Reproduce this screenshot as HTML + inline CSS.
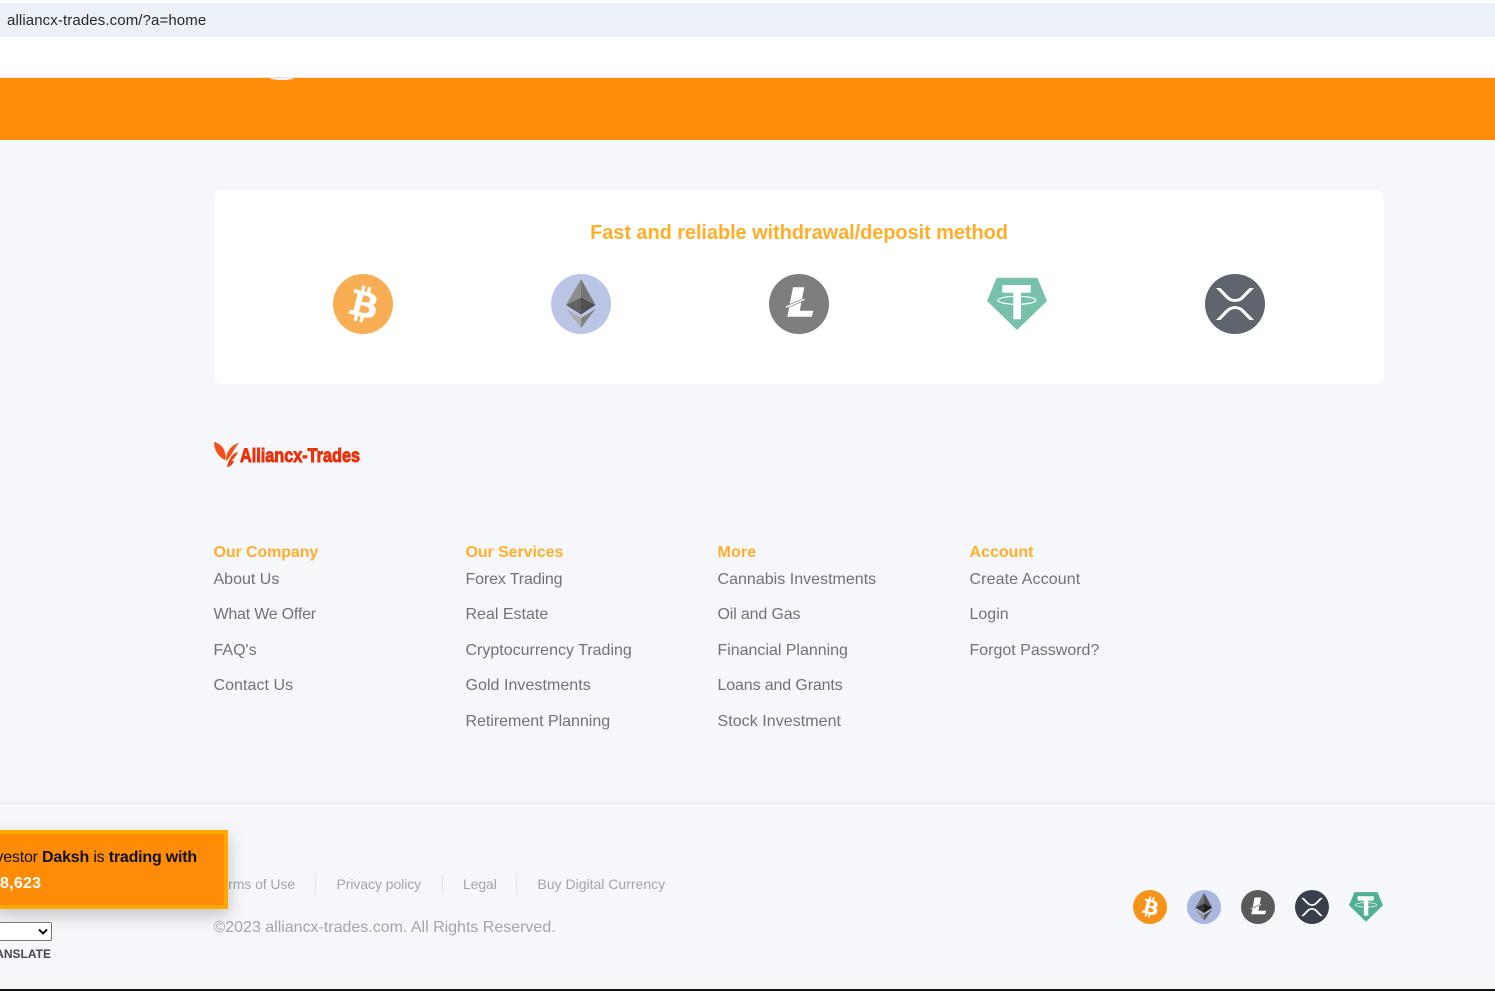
<!DOCTYPE html>
<html lang="en"><head><meta charset="utf-8"><title>alliancx-trades.com</title>
<style>
html,body{margin:0;padding:0;width:1495px;height:991px;overflow:hidden;background:#f5f7fa;font-family:"Liberation Sans",sans-serif}
.a{position:absolute;white-space:nowrap}
.h{font-size:16px;font-weight:700;color:#ffae2b;line-height:20px}
.l{font-size:16px;color:#6f7278;line-height:20px}
.s{font-size:14px;color:#a2a5ab;line-height:18px}
.v{position:absolute;width:1px;height:21px;top:874px;background:#e2e4e8}
svg{position:absolute;display:block}
</style></head><body>
<svg width="0" height="0" style="position:absolute"><defs>
<symbol id="btc" viewBox="0 0 32 32"><circle cx="16" cy="16" r="16" fill="#f7931a"/><path fill="#fff" d="M23.189 14.02c.314-2.096-1.283-3.223-3.465-3.975l.708-2.84-1.728-.43-.69 2.765c-.454-.114-.92-.22-1.385-.326l.695-2.783L15.596 6l-.708 2.839c-.376-.086-.746-.17-1.104-.26l.002-.009-2.384-.595-.46 1.846s1.283.294 1.256.312c.7.175.826.638.805 1.006l-.806 3.235c.048.012.11.03.18.057l-.183-.045-1.13 4.532c-.086.212-.303.531-.793.41.018.025-1.256-.313-1.256-.313l-.858 1.978 2.25.561c.418.105.828.215 1.231.318l-.715 2.872 1.727.43.708-2.84c.472.127.93.245 1.378.357l-.706 2.828 1.728.43.715-2.866c2.948.558 5.164.333 6.097-2.333.752-2.146-.037-3.385-1.588-4.192 1.13-.26 1.98-1.003 2.207-2.538zm-3.95 5.538c-.533 2.147-4.148.986-5.32.695l.95-3.805c1.172.293 4.929.872 4.37 3.11zm.535-5.569c-.487 1.953-3.495.96-4.47.717l.86-3.45c.975.243 4.118.696 3.61 2.733z"/></symbol>
<symbol id="eth" viewBox="0 0 60 60"><circle cx="30" cy="30" r="30" fill="#a9b6de"/><polygon points="30,5 15,31 30,23.5" fill="#6f6f6f"/><polygon points="30,5 44.5,31 30,23.5" fill="#505050"/><polygon points="15,31 30,23.5 30,40.500" fill="#353535"/><polygon points="44.5,31 30,23.5 30,40.500" fill="#1f1f1f"/><polygon points="15,35 30,44 30,54" fill="#959595"/><polygon points="44.5,35 30,44 30,54" fill="#5f5f5f"/></symbol>
<symbol id="ltc" viewBox="0 0 60 60"><circle cx="30" cy="30" r="30" fill="#5a5a5a"/><polygon fill="#fff" points="24,13.3 35.3,13.3 30.7,36.7 44.3,36.7 42.7,42.7 18.3,42.7"/><path d="M17 33.2L35.500 25.300" stroke="#5a5a5a" stroke-width="2.8" fill="none"/><path d="M17 33.2L35.500 25.300" stroke="#fff" stroke-width="1.4" fill="none"/></symbol>
<symbol id="xrp" viewBox="0 0 60 60"><circle cx="30" cy="30" r="30" fill="#373f4a"/><path fill="#fff" d="M11 14H15.500L24 22.800C27 25.800 33 25.800 36 22.800L44.500 14H49L38.500 24.700C34 29 26 29 21.500 24.700Z"/><path fill="#fff" d="M11 46H15.500L24 37.200C27 34.200 33 34.200 36 37.200L44.500 46H49L38.500 35.300C34 31 26 31 21.500 35.300Z"/></symbol>
<symbol id="usdt" viewBox="0 0 60 60"><polygon points="9.7,3.7 50.3,3.7 60,27 30,56 0,27" fill="#50af95"/><path fill="#fff" d="M15.3 11H43.7V18.7H34V45.3H26.3V18.7H15.3Z"/><ellipse cx="30" cy="26.3" rx="19" ry="4" fill="none" stroke="#fff" stroke-width="1.2"/></symbol>
</defs></svg>

<div class="a" style="left:0;top:0;width:1495px;height:3px;background:#fff"></div>
<div class="a" style="left:0;top:3px;width:1495px;height:34px;background:#ebf0f9"></div>
<div class="a" style="left:7px;top:12px;font-size:15px;line-height:18px;color:#26282c;letter-spacing:.11px">alliancx-trades.com/?a=home</div>
<div class="a" style="left:0;top:37px;width:1495px;height:41px;background:#fff"></div>
<div class="a" style="left:0;top:77px;width:1495px;height:1px;background:#e4e4e4"></div>
<div class="a" style="left:0;top:78px;width:1495px;height:62px;background:#ff8d0a"></div>
<div class="a" style="left:270px;top:78px;width:24px;height:2px;background:#f1f1f1;border-radius:0 0 12px 12px/0 0 2px 2px"></div>

<div class="a" style="left:214px;top:190px;width:1170px;height:194px;background:#fff;border-radius:8px"></div>
<div class="a" style="left:214px;top:221px;width:1170px;text-align:center;font-size:20px;font-weight:700;line-height:24px;color:#ffae2b;letter-spacing:-.08px">Fast and reliable withdrawal/deposit method</div>
<svg style="left:333px;top:274px;opacity:.75" width="60" height="60"><use href="#btc"/></svg>
<svg style="left:551px;top:274px;opacity:.78" width="60" height="60"><use href="#eth"/></svg>
<svg style="left:769px;top:274px;opacity:.78" width="60" height="60"><use href="#ltc"/></svg>
<svg style="left:987px;top:274px;opacity:.78" width="60" height="60"><use href="#usdt"/></svg>
<svg style="left:1205px;top:274px;opacity:.8" width="60" height="60"><use href="#xrp"/></svg>

<svg style="left:213px;top:440px" width="150" height="30" viewBox="0 0 150 30">
<defs><linearGradient id="g" x1="0" y1="0" x2="0" y2="1"><stop offset="0" stop-color="#f0440f"/><stop offset="1" stop-color="#e81f05"/></linearGradient></defs>
<path fill="#f4501a" d="M1 2C6 3 11 7 12 13C13 16 13 18 12 20C7 18 1 11 1 2Z"/>
<path fill="#f4501a" d="M26 3C21 4 16 8 14 14C13 17 13 19 13 21C18 17 20 10 26 3Z"/>
<path fill="#ee3a0c" d="M25 12C20 13 16 18 14 27C17 27 20 24 21 21L18 20.500C21 19 23 16 25 12Z"/>
<text x="27" y="22" fill="url(#g)" font-family="'Liberation Sans',sans-serif" font-weight="700" font-size="19" stroke="#e8300a" stroke-width=".9" textLength="120" lengthAdjust="spacingAndGlyphs">Alliancx-Trades</text>
</svg>

<div class="a h" style="left:213.500px;top:543px;letter-spacing:-.1px">Our Company</div>
<div class="a l" style="left:213.500px;top:570px">About Us</div>
<div class="a l" style="left:213.500px;top:605px;letter-spacing:-.22px">What We Offer</div>
<div class="a l" style="left:213.500px;top:641px">FAQ's</div>
<div class="a l" style="left:213.500px;top:676px;letter-spacing:.05px">Contact Us</div>

<div class="a h" style="left:465.500px;top:543px;letter-spacing:-.08px">Our Services</div>
<div class="a l" style="left:465.500px;top:570px;letter-spacing:-.14px">Forex Trading</div>
<div class="a l" style="left:465.500px;top:605px">Real Estate</div>
<div class="a l" style="left:465.500px;top:641px">Cryptocurrency Trading</div>
<div class="a l" style="left:465.500px;top:676px;letter-spacing:.05px">Gold Investments</div>
<div class="a l" style="left:465.500px;top:712px;letter-spacing:-.02px">Retirement Planning</div>

<div class="a h" style="left:717.500px;top:543px;letter-spacing:.15px">More</div>
<div class="a l" style="left:717.500px;top:570px;letter-spacing:.02px">Cannabis Investments</div>
<div class="a l" style="left:717.500px;top:605px;letter-spacing:-.15px">Oil and Gas</div>
<div class="a l" style="left:717.500px;top:641px;letter-spacing:-.02px">Financial Planning</div>
<div class="a l" style="left:717.500px;top:676px;letter-spacing:-.13px">Loans and Grants</div>
<div class="a l" style="left:717.500px;top:712px;letter-spacing:.05px">Stock Investment</div>

<div class="a h" style="left:969.500px;top:543px">Account</div>
<div class="a l" style="left:969.500px;top:570px;letter-spacing:.1px">Create Account</div>
<div class="a l" style="left:969.500px;top:605px">Login</div>
<div class="a l" style="left:969.500px;top:641px">Forgot Password?</div>

<div class="a" style="left:0;top:803px;width:1495px;height:1px;background:#e6e8ec"></div>

<div class="a s" style="left:213.500px;top:875px;letter-spacing:-.07px">Terms of Use</div>
<div class="v" style="left:315px"></div>
<div class="a s" style="left:336.500px;top:875px;letter-spacing:-.07px">Privacy policy</div>
<div class="v" style="left:442px"></div>
<div class="a s" style="left:463px;top:875px;letter-spacing:-.1px">Legal</div>
<div class="v" style="left:516px"></div>
<div class="a s" style="left:537.500px;top:875px">Buy Digital Currency</div>
<div class="a" style="left:213.500px;top:918px;font-size:16px;line-height:20px;color:#a2a5ab;letter-spacing:-.01px">©2023 alliancx-trades.com. All Rights Reserved.</div>

<svg style="left:1133px;top:890px" width="34" height="34"><use href="#btc"/></svg>
<svg style="left:1187px;top:890px" width="34" height="34"><use href="#eth"/></svg>
<svg style="left:1241px;top:890px" width="34" height="34"><use href="#ltc"/></svg>
<svg style="left:1295px;top:890px" width="34" height="34"><use href="#xrp"/></svg>
<svg style="left:1349px;top:890px" width="34" height="34"><use href="#usdt"/></svg>

<div class="a" style="left:-4px;top:830px;width:224px;height:71px;background:#ff8c07;border:4px solid #ffa800;box-shadow:0 6px 16px rgba(0,0,0,.22);overflow:hidden">
<div class="a" style="right:27px;top:14px;font-size:16px;line-height:20px;color:#111;letter-spacing:-.2px">Investor <b>Daksh</b> is <b>trading with</b></div>
<div class="a" style="left:0;top:40px;font-size:16px;line-height:20px;font-weight:700;color:#fff;letter-spacing:.25px">8,623</div>
</div>

<div class="a" style="left:-10px;top:922px;width:60px;height:17px;background:#fff;border:1px solid #767676;border-radius:2px"></div>
<svg style="left:37px;top:928px" width="12" height="8" viewBox="0 0 12 8"><path d="M2 1.500L6 5.500L10 1.500" fill="none" stroke="#111" stroke-width="2"/></svg>
<div class="a" style="left:0;width:51px;top:947px;height:14px;overflow:hidden;font-size:12px;font-weight:700;line-height:14px;color:#44474c"><span class="a" style="right:0;top:0">TRANSLATE</span></div>

<div class="a" style="left:0;top:989px;width:1495px;height:2px;background:#111"></div>
</body></html>
